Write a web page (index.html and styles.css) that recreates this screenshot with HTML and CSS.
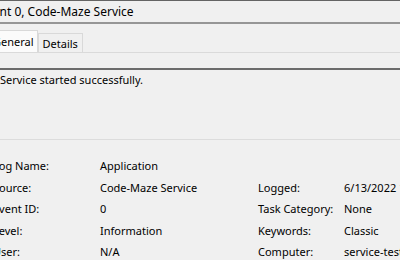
FILE: index.html
```html
<!DOCTYPE html>
<html>
<head>
<meta charset="utf-8">
<link rel="stylesheet" href="styles.css">
</head>
<body>
<div class="window">
  <div class="titlebar"><span class="title">Event 0, Code-Maze Service</span></div>
  <div class="tabs">
    <div class="tab tab-active">General</div>
    <div class="tab">Details</div>
  </div>
  <div class="tabband"></div>
  <div class="message">Service started successfully.</div>
  <div class="props">
    <div class="lbl">Log Name:</div><div class="val">Application</div><div></div><div></div>
    <div class="lbl">Source:</div><div class="val">Code-Maze Service</div><div class="lbl2">Logged:</div><div class="val">6/13/2022 10:12:45 AM</div>
    <div class="lbl">Event ID:</div><div class="val">0</div><div class="lbl2">Task Category:</div><div class="val">None</div>
    <div class="lbl">Level:</div><div class="val">Information</div><div class="lbl2">Keywords:</div><div class="val">Classic</div>
    <div class="lbl">User:</div><div class="val">N/A</div><div class="lbl2">Computer:</div><div class="val">service-test</div>
  </div>
</div>
</body>
</html>
```

FILE: styles.css
```css
html, body {
  margin: 0;
  padding: 0;
  background: #f0f0f0;
  overflow: hidden;
}
body {
  width: 400px;
  height: 260px;
  font-family: "Noto Sans", "Open Sans", sans-serif;
  font-size: 11px;
  color: #000;
}
.window {
  width: 400px;
}
.titlebar {
  height: 21px;
  border-top: 1px solid #646464;
  border-bottom: 2px solid #969696;
  display: flex;
  align-items: center;
  white-space: nowrap;
  overflow: hidden;
}
.title {
  margin-left: -20px;
  font-size: 12px;
}
.tabs {
  height: 28px;
  display: flex;
  align-items: flex-end;
  border-bottom: 1px solid #dadada;
  overflow: hidden;
}
.tab {
  height: 19px;
  padding: 0 4px;
  border: 1px solid #d9d9d9;
  border-bottom: none;
  background: #f0f0f0;
  display: flex;
  align-items: center;
  margin-bottom: -1px;
  white-space: nowrap;
}
.tab-active {
  background: #fbfbfb;
  margin-left: -14px;
  padding: 0 3px 0 6px;
  align-items: flex-start;
  box-sizing: border-box;
  height: 23px;
  line-height: 22px;
}
.tabband {
  height: 15px;
  border-bottom: 2px solid #6b6b6b;
}
.message {
  height: 70px;
  padding-top: 2px;
  box-sizing: border-box;
  border-bottom: 1px solid #dcdcdc;
  white-space: nowrap;
  line-height: 16px;
}
.props {
  display: grid;
  grid-template-columns: 107px 158px 86px 1fr;
  grid-auto-rows: 21.5px;
  align-items: center;
  margin-left: -7px;
  padding-top: 15px;
  white-space: nowrap;
}
```
